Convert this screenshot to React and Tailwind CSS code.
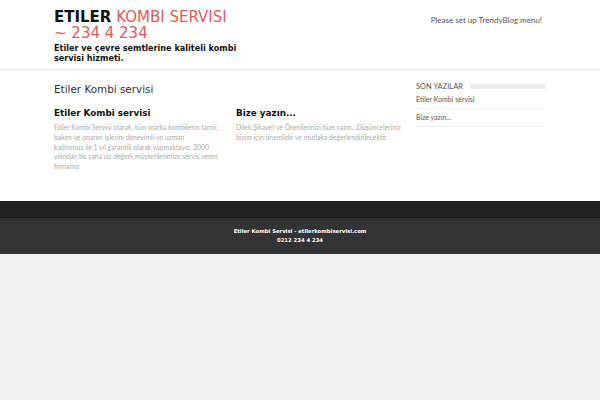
import React from 'react';

const posts = ['Etiler Kombi servisi', 'Bize yazın...'];

const App = () => {
  return (
    <div className="min-h-[400px] bg-[#f0f0f0]" style={{ fontFamily: '"DejaVu Sans", sans-serif' }}>
      {/* Üst kısım */}
      <header className="bg-white border-b-[3px] border-[#f2f2f2]">
        <div className="w-[492px] mx-auto flex justify-between h-[68px]">
          <div className="w-[190px] pt-[9px]">
            <h1 className="text-[15px] leading-[16px] text-[#e05a5a] whitespace-nowrap">
              <span className="font-bold text-[#111]">ETILER</span> KOMBI SERVISI<br />~ 234 4 234
            </h1>
            <p className="text-[8.1px] leading-[10px] font-bold text-[#111] mt-[2px] whitespace-nowrap">
              Etiler ve çevre semtlerine kaliteli kombi<br />servisi hizmeti.
            </p>
          </div>
          <div className="pt-[14px] pr-[4px] text-[8px] text-[#555]" style={{ fontFamily: 'Lato, sans-serif' }}>
            Please set up TrendyBlog menu!
          </div>
        </div>
      </header>

      {/* İçerik */}
      <main className="bg-white h-[130px]">
        <div className="w-[492px] mx-auto flex justify-between pt-[12px]">
          <div className="w-[346px]">
            <h2 className="text-[10.4px] text-[#333] leading-[13px]">Etiler Kombi servisi</h2>
            <div className="grid grid-cols-2 gap-[18px] mt-[11px]">
              <div>
                <h3 className="text-[8.8px] font-bold text-[#111] leading-[12px]">Etiler Kombi servisi</h3>
                <p className="text-[6.8px] leading-[9.8px] text-[#aaa] mt-[4px] whitespace-nowrap" style={{ fontFamily: 'Lato, sans-serif' }}>
                  Etiler Kombi Servisi olarak, tüm marka kombilerin tamir,<br />
                  bakım ve onarım işlerini deneyimli ve uzman<br />
                  kadromuz ile 1 yıl garantili olarak yapmaktayız. 2000<br />
                  yılından bu yana siz değerli müşterilerimize servis veren<br />
                  firmamız
                </p>
              </div>
              <div>
                <h3 className="text-[8.8px] font-bold text-[#111] leading-[12px]">Bize yazın...</h3>
                <p className="text-[6.8px] leading-[9.8px] text-[#aaa] mt-[4px] whitespace-nowrap" style={{ fontFamily: 'Lato, sans-serif' }}>
                  Dilek,Şikayet ve Önerilerinizi bize yazın…Düşünceleriniz<br />
                  bizim için önemlidir ve mutlaka değerlendirilecektir.
                </p>
              </div>
            </div>
          </div>
          <aside className="w-[130px] text-[#555]" style={{ fontFamily: 'Lato, sans-serif' }}>
            <div className="flex items-center gap-[7px] h-[9px] mt-[-1px]">
              <span className="text-[7.5px] leading-[9px] uppercase">Son Yazılar</span>
              <span className="flex-1 h-[5px] bg-[#ececec]"></span>
            </div>
            <ul className="pr-[2px]">
              {posts.map((p) => (
                <li key={p} className="text-[7px] leading-[9px] py-[4px] border-b border-[#eee]">{p}</li>
              ))}
            </ul>
          </aside>
        </div>
      </main>

      {/* Alt kısım */}
      <footer>
        <div className="h-[17px] bg-[#222] border-b border-[#1a1a1a]"></div>
        <div className="h-[36px] bg-[#333] flex flex-col items-center justify-center text-white font-bold text-[5.3px] leading-[9px]">
          <span>Etiler Kombi Servisi - etilerkombiservisi.com</span>
          <span>0212 234 4 234</span>
        </div>
      </footer>
    </div>
  );
};

export default App;
